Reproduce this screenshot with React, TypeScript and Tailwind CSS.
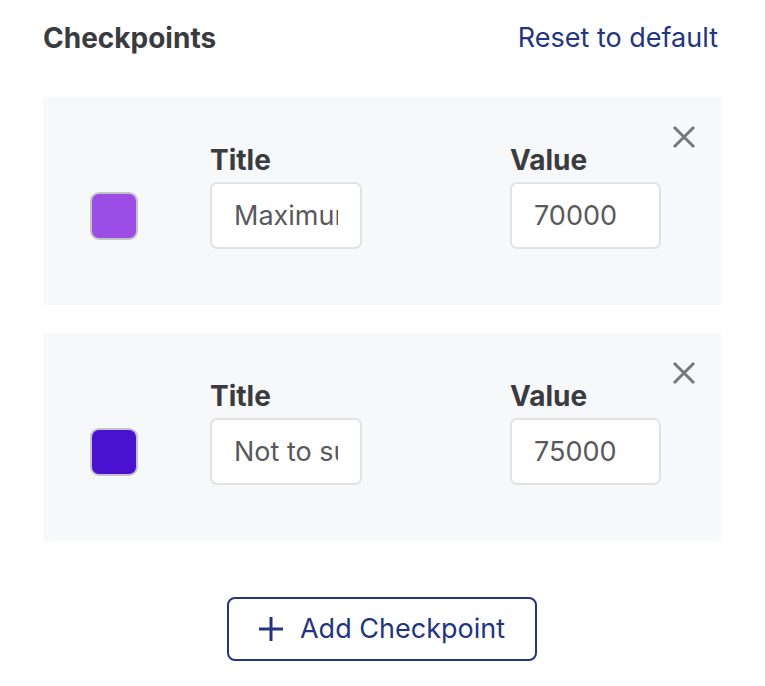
import React from "react";

function XIcon() {
  return (
    <svg width="24" height="24" viewBox="0 0 24 24" fill="none" stroke="#777777" strokeWidth="3" strokeLinecap="butt">
      <path d="M2 2 L22 22 M22 2 L2 22" />
    </svg>
  );
}

function Card({ color, title, value }: { color: string; title: string; value: string }) {
  return (
    <div className="relative bg-[#f7f8fa] h-[208px] pl-[47px] flex items-end pb-[56px]">
      <button className="absolute right-[25px] top-[28px]">
        <XIcon />
      </button>
      <div
        className="w-[48px] h-[48px] rounded-[9px] border-2 border-[#c4c4c8] mb-[9px] shrink-0"
        style={{ backgroundColor: color }}
      />
      <div className="ml-[72px] flex flex-col">
        <div className="text-[28px] leading-[32px] font-bold text-[#3a3b3f] mb-[6px]">Title</div>
        <input
          readOnly
          value={title}
          className="w-[152px] h-[67px] rounded-[7px] border-2 border-[#e2e2e4] bg-white px-[22px] text-[27px] text-[#58595d] outline-none"
        />
      </div>
      <div className="ml-[148px] flex flex-col">
        <div className="text-[28px] leading-[32px] font-bold text-[#3a3b3f] mb-[6px]">Value</div>
        <input
          readOnly
          value={value}
          className="w-[151px] h-[67px] rounded-[7px] border-2 border-[#e2e2e4] bg-white px-[22px] text-[27px] text-[#58595d] outline-none"
        />
      </div>
    </div>
  );
}

export default function App() {
  return (
    <div className="w-[765px] h-[686px] bg-white font-['Inter',sans-serif]">
      <div className="ml-[43px] w-[678px] pt-[21px]">
        <div className="flex justify-between items-center h-[34px]">
          <div className="text-[28px] font-bold text-[#3a3b3f]">Checkpoints</div>
          <button className="text-[27px] text-[#233580] mr-[3px]">Reset to default</button>
        </div>
        <div className="mt-[42px] flex flex-col gap-[28px]">
          <Card color="#9b4de6" title="Maximum Budget" value="70000" />
          <Card color="#4a12d0" title="Not to surpass" value="75000" />
        </div>
        <div className="flex justify-center mt-[56px]">
          <button className="w-[310px] h-[64px] rounded-[8px] border-2 border-[#233580] text-[#233580] flex items-center justify-center gap-[17px] text-[27px]">
            <svg width="24" height="24" viewBox="0 0 24 24" stroke="#233580" strokeWidth="3">
              <path d="M12 0 V24 M0 12 H24" />
            </svg>
            <span>Add Checkpoint</span>
          </button>
        </div>
      </div>
    </div>
  );
}
